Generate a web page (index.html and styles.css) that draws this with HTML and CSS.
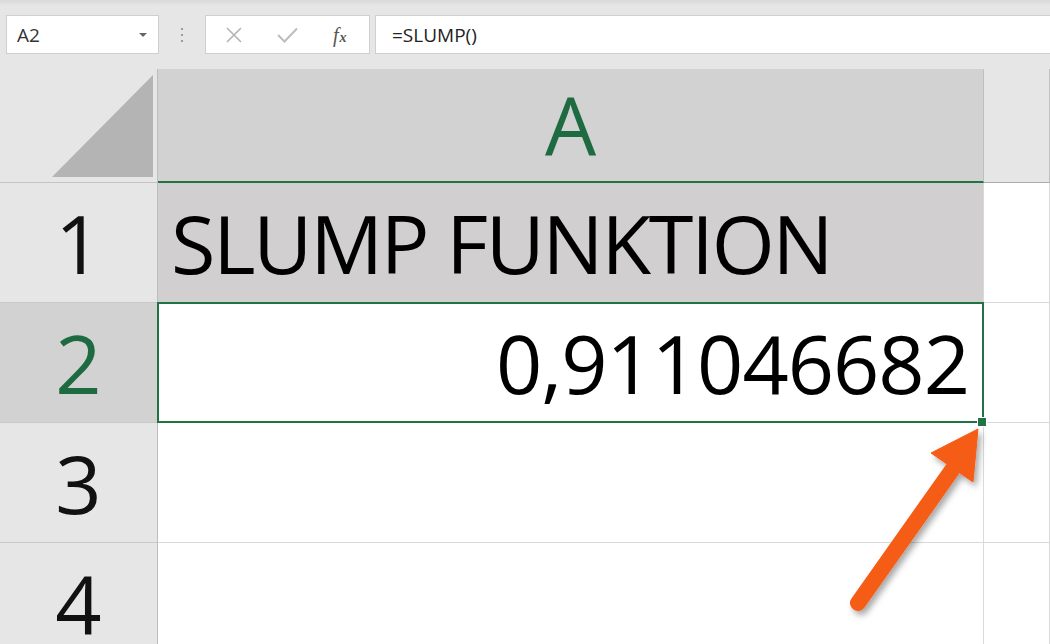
FILE: index.html
```html
<!DOCTYPE html>
<html>
<head>
<meta charset="utf-8">
<link rel="stylesheet" href="styles.css">
</head>
<body>
<div class="app">
  <div class="toolbar">
    <div class="namebox">
      <span class="ref">A2</span>
      <span class="caret"></span>
    </div>
    <div class="grip"><i></i><i></i><i></i></div>
    <div class="fxbox">
      <svg class="ico" width="18" height="16" viewBox="0 0 18 16"><path d="M2 1 L16 15 M16 1 L2 15" stroke="#b4b4b4" stroke-width="1.6" fill="none"/></svg>
      <svg class="ico" width="21" height="16" viewBox="0 0 21 16"><path d="M1 8 L7.5 14.5 L20 1.5" stroke="#bdbdbd" stroke-width="2" fill="none"/></svg>
      <span class="fx"><span class="f">f</span><span class="x">x</span></span>
    </div>
    <div class="formula">=SLUMP()</div>
  </div>

  <div class="sheet">
    <div class="corner">
      <svg width="157" height="113" viewBox="0 0 157 113"><polygon points="52,108 153,6 153,108" fill="#b4b4b4"/></svg>
    </div>
    <div class="colhead colsel">A</div>
    <div class="colhead"></div>

    <div class="rowhead">1</div>
    <div class="cell fill">SLUMP FUNKTION</div>
    <div class="cell"></div>

    <div class="rowhead rowsel">2</div>
    <div class="cell active num">0,911046682</div>
    <div class="cell"></div>

    <div class="rowhead">3</div>
    <div class="cell"></div>
    <div class="cell"></div>

    <div class="rowhead">4</div>
    <div class="cell"></div>
    <div class="cell"></div>
  </div>

  <svg class="arrow" width="1050" height="644" viewBox="0 0 1050 644">
    <defs>
      <filter id="sh" x="-20%" y="-20%" width="140%" height="140%">
        <feDropShadow dx="3" dy="4" stdDeviation="3" flood-color="#000" flood-opacity="0.35"/>
      </filter>
    </defs>
    <g filter="url(#sh)" fill="#f55c14" stroke="#f55c14">
      <line x1="858" y1="603" x2="952" y2="470" stroke-width="16" stroke-linecap="round"/>
      <polygon points="978,429 931,453 973,482" stroke-width="1" stroke-linejoin="round"/>
    </g>
  </svg>
</div>
</body>
</html>
```

FILE: styles.css
```css
* { box-sizing: border-box; }
html, body { margin: 0; padding: 0; }
body {
  width: 1050px;
  height: 644px;
  overflow: hidden;
  background: #e6e6e6;
  font-family: "Open Sans", "Noto Sans", sans-serif;
}
.app {
  position: relative;
  width: 1050px;
  height: 644px;
  overflow: hidden;
}

/* toolbar */
.toolbar {
  height: 69px;
  display: flex;
  align-items: flex-start;
  padding: 15px 0 0 6px;
  background: linear-gradient(#d9d9d9 0, #e6e6e6 6px, #e6e6e6 100%);
  white-space: nowrap;
}
.toolbar > * { flex-shrink: 0; }
.namebox {
  width: 153px;
  height: 39px;
  background: #fff;
  border: 1px solid #cfcfcf;
  display: flex;
  align-items: center;
  justify-content: space-between;
  padding: 0 11px 0 10px;
}
.ref {
  font-size: 19px;
  color: #333;
}
.caret {
  width: 0;
  height: 0;
  border-left: 4px solid transparent;
  border-right: 4px solid transparent;
  border-top: 4px solid #666;
}
.grip {
  width: 46px;
  height: 39px;
  display: flex;
  flex-direction: column;
  align-items: center;
  justify-content: center;
  gap: 4px;
}
.grip i {
  display: block;
  width: 2px;
  height: 2px;
  background: #9a9a9a;
}
.fxbox {
  width: 165px;
  height: 39px;
  background: #fff;
  border: 1px solid #cfcfcf;
  display: flex;
  align-items: center;
  padding: 0 0 0 19px;
}
.fxbox .ico { display: block; }
.fxbox .ico:first-child { margin-right: 34px; }
.fxbox .ico:nth-child(2) { margin-right: 35px; }
.fx {
  font-family: "Liberation Serif", serif;
  font-style: italic;
  color: #555;
  font-size: 20px;
  line-height: 20px;
  display: flex;
  align-items: flex-end;
}
.fx .x { font-size: 14px; line-height: 14px; margin-left: 1px; font-weight: bold; }
.formula {
  margin-left: 5px;
  width: 700px;
  height: 39px;
  background: #fff;
  border: 1px solid #cfcfcf;
  font-size: 19px;
  color: #222;
  display: flex;
  align-items: center;
  padding-left: 16px;
}

/* sheet grid */
.sheet {
  display: grid;
  grid-template-columns: 158px 826px 1fr;
  grid-template-rows: 114px 120px 120px 120px 120px;
  font-size: 81px;
  color: #000;
}
.corner {
  background: #e6e6e6;
  border-right: 1px solid #bdbdbd;
  border-bottom: 1px solid #c4c4c4;
}
.corner svg { display: block; }
.colhead {
  background: #e6e6e6;
  border-right: 1px solid #bfbfbf;
  border-bottom: 1px solid #acacac;
  text-align: center;
  line-height: 110px;
}
.colsel {
  background: #d2d2d2;
  color: #1f6b41;
  border-bottom: 2px solid #217346;
}
.rowhead {
  background: #e6e6e6;
  border-right: 1px solid #bdbdbd;
  border-bottom: 1px solid #c8c8c8;
  text-align: center;
  line-height: 119px;
  color: #111;
}
.rowsel {
  background: #d2d2d2;
  color: #1f6b41;
}
.cell {
  background: #fff;
  border-right: 1px solid #dadada;
  border-bottom: 1px solid #dadada;
  line-height: 119px;
  white-space: nowrap;
}
.fill {
  background: #d1cfcf;
  padding-left: 13px;
  letter-spacing: -2.2px;
}
.num {
  text-align: right;
  padding-right: 14px;
  letter-spacing: -1px;
}
.active {
  position: relative;
}
.active::after {
  content: "";
  position: absolute;
  top: -1px;
  left: -1px;
  right: -1px;
  bottom: -1px;
  border: 2px solid #217346;
}
.active::before {
  content: "";
  position: absolute;
  right: -4px;
  bottom: -5px;
  width: 8px;
  height: 8px;
  background: #217346;
  border: 1px solid #fff;
  z-index: 2;
}

.arrow {
  position: absolute;
  left: 0;
  top: 0;
  pointer-events: none;
}
```
